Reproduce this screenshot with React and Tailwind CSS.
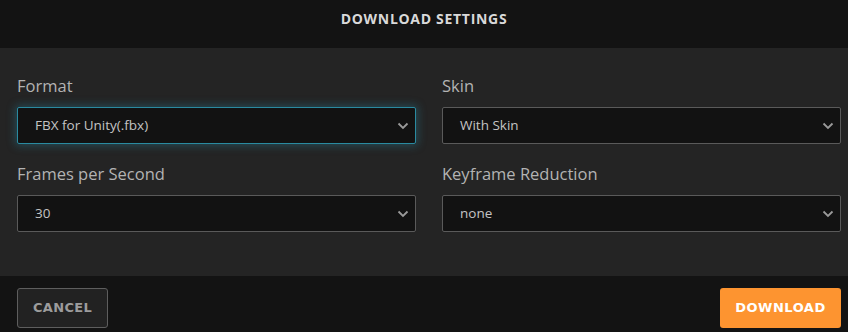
import React from "react";

function Chevron() {
  return (
    <svg width="12" height="8" viewBox="0 0 12 8" className="shrink-0">
      <path d="M1.5 1.5 L6 6 L10.5 1.5" fill="none" stroke="#9a9a9a" strokeWidth="1.8" />
    </svg>
  );
}

function Field({ label, value, focused }) {
  return (
    <div className="flex flex-col">
      <div className="h-[30px] flex items-center text-[16.5px] text-[#b3b3b3] mb-[6px]">{label}</div>
      <div
        className={
          "h-[37px] flex items-center justify-between pl-[17px] pr-[6px] rounded-[2px] bg-[#121212] text-[13.5px] text-[#c4c4c4] border " +
          (focused
            ? "border-[#2a8aa0] shadow-[0_0_8px_2px_rgba(40,140,170,0.35)]"
            : "border-[#5a5a5a]")
        }
      >
        <span>{value}</span>
        <Chevron />
      </div>
    </div>
  );
}

export default function App() {
  return (
    <div className="w-[848px] h-[332px] flex flex-col bg-[#131313] font-['Open_Sans',sans-serif]">
      <div className="h-[48px] flex items-start justify-center text-[14px] font-bold text-[#d9d9d9] tracking-[0.7px]">
        <span className="mt-[8px]">DOWNLOAD SETTINGS</span>
      </div>
      <div className="h-[228px] bg-[#242424] pl-[17px] pr-[7px] pt-[23px] grid grid-cols-2 gap-x-[26px] gap-y-[15px] content-start">
        <Field label="Format" value="FBX for Unity(.fbx)" focused />
        <Field label="Skin" value="With Skin" />
        <Field label="Frames per Second" value="30" />
        <Field label="Keyframe Reduction" value="none" />
      </div>
      <div className="flex-1 flex items-start justify-between pl-[17px] pr-[7px] pt-[12px]">
        <button className="h-[40px] w-[91px] rounded-[3px] border border-[#5e5e5e] bg-[#222222] text-[#9c9c9c] text-[13px] font-bold tracking-[0.3px] font-['DejaVu_Sans',sans-serif]">
          CANCEL
        </button>
        <button className="h-[40px] w-[121px] rounded-[3px] bg-[#fd9430] text-white text-[13px] font-bold tracking-[0.5px] font-['DejaVu_Sans',sans-serif]">
          DOWNLOAD
        </button>
      </div>
    </div>
  );
}
